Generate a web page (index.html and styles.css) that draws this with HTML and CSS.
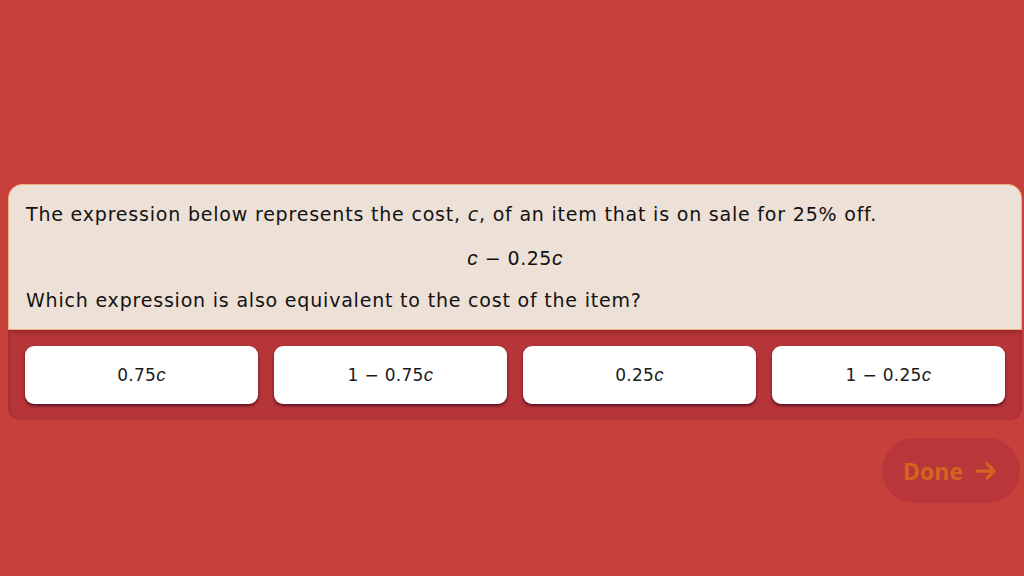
FILE: index.html
```html
<!DOCTYPE html>
<html>
<head>
<meta charset="utf-8">
<link rel="stylesheet" href="styles.css">
</head>
<body>
<div class="page">
  <div class="question">
    <p class="prompt">The expression below represents the cost, <i class="var">c</i>, of an item that is on sale for 25% off.</p>
    <p class="math"><i class="mvar">c</i> − 0.25<i class="mvar">c</i></p>
    <p class="prompt">Which expression is also equivalent to the cost of the item?</p>
  </div>
  <div class="answers">
    <button class="choice">0.75<i class="mvar">c</i></button>
    <button class="choice">1 − 0.75<i class="mvar">c</i></button>
    <button class="choice">0.25<i class="mvar">c</i></button>
    <button class="choice">1 − 0.25<i class="mvar">c</i></button>
  </div>
  <div class="footer">
    <button class="done">Done <svg class="arrow" viewBox="0 0 24 24" width="26" height="26"><path d="M4 12h15M13 5.5l6.5 6.5-6.5 6.5" fill="none" stroke="currentColor" stroke-width="3" stroke-linecap="round" stroke-linejoin="round"/></svg></button>
  </div>
</div>
</body>
</html>
```
FILE: styles.css
```css
html, body {
  margin: 0;
  padding: 0;
  height: 100%;
  background: #c8403b;
}
.page {
  width: 1024px;
  height: 576px;
  padding-top: 184px;
  box-sizing: border-box;
  font-family: "DejaVu Sans", "Liberation Sans", sans-serif;
}
.question {
  margin: 0 2px 0 8px;
  background: #ede0d6;
  border: 1px solid #eeb27a;
  border-radius: 14px 14px 0 0;
  padding: 16px 17px 14px 17px;
  height: 146px;
  box-sizing: border-box;
  color: #121212;
}
.prompt {
  margin: 0;
  font-size: 19px;
  line-height: 26px;
  letter-spacing: 0.8px;
}
.var {
  font-style: italic;
}
.math {
  margin: 18px 0 16px;
  text-align: center;
  font-size: 19px;
  line-height: 26px;
  letter-spacing: 0.5px;
}
.mvar {
  font-family: "Liberation Sans", sans-serif;
  font-style: italic;
  font-size: 1.1em;
}
.answers {
  margin: 0 2px 0 8px;
  background: #b53539;
  border-radius: 0 0 12px 12px;
  padding: 16px 17px 16px 17px;
  display: grid;
  grid-template-columns: repeat(4, 1fr);
  gap: 16px;
  box-shadow: inset 0 2px 4px rgba(90, 10, 20, 0.35);
}
.choice {
  height: 58px;
  background: #fff;
  border: none;
  border-radius: 9px;
  box-shadow: 0 2px 3px #5e1022;
  font-family: "DejaVu Sans", sans-serif;
  font-size: 17px;
  letter-spacing: 0.3px;
  color: #1a1a1a;
  padding: 0;
}
.footer {
  display: flex;
  justify-content: flex-end;
  padding: 18px 4px 0 0;
}
.done {
  width: 138px;
  height: 65px;
  border: none;
  border-radius: 33px;
  background: #b9363a;
  color: #d2661f;
  font-family: "Open Sans", sans-serif;
  font-weight: 700;
  font-size: 23px;
  display: flex;
  align-items: center;
  justify-content: center;
  gap: 10px;
  padding: 0;
}
.arrow {
  width: 26px;
  height: 26px;
}
```
